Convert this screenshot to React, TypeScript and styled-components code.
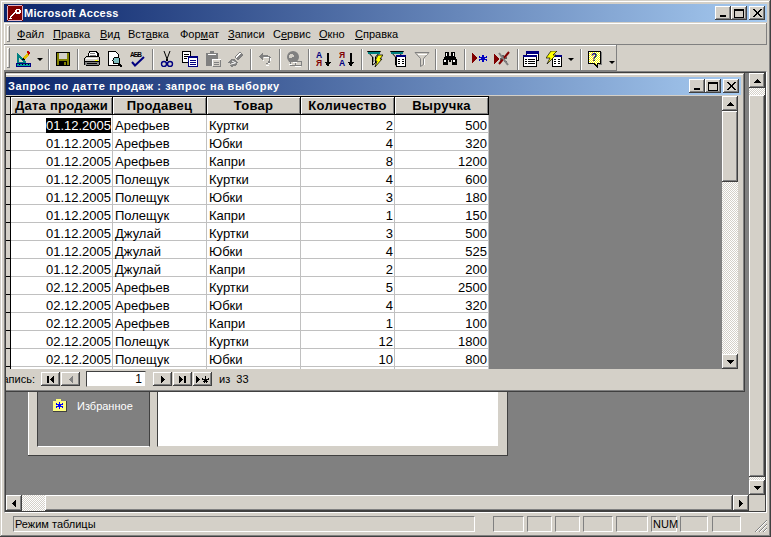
import React from 'react'
import styled, { createGlobalStyle } from 'styled-components'

const FACE = '#d4d0c8'
const raised = `box-shadow: inset -1px -1px 0 #404040, inset 1px 1px 0 #fff, inset -2px -2px 0 #808080;`
const checker = `background: repeating-conic-gradient(#fff 0 25%, ${FACE} 0 50%) 0 0 / 2px 2px;`

const GlobalStyle = createGlobalStyle`
  html, body { margin: 0; padding: 0; background: ${FACE}; }
  body { font-family: "Liberation Sans", Arial, sans-serif; font-size: 11px; color: #000; }
  svg { display: block; }
`

const Frame = styled.div`
  width: 771px;
  height: 537px;
  box-sizing: border-box;
  padding: 4px;
  background: ${FACE};
  display: flex;
  flex-direction: column;
  overflow: hidden;
  box-shadow: inset -1px -1px 0 #404040, inset 1px 1px 0 ${FACE}, inset -2px -2px 0 #808080, inset 2px 2px 0 #fff;
`
const TitleBar = styled.div`
  height: 18px;
  flex: none;
  display: flex;
  align-items: center;
  gap: 1px;
  padding: 0 2px 0 3px;
  background: linear-gradient(90deg, #0a246a, #a6caf0);
  color: #fff;
  font-weight: bold;
`
const MainTitle = styled.span`
  font-size: 11px;
  letter-spacing: 0.25px;
  white-space: nowrap;
`
const ChildTitle = styled.span`
  font-size: 11px;
  letter-spacing: 0.6px;
  margin-left: 1px;
  white-space: nowrap;
`
const TitleButtons = styled.div`
  margin-left: auto;
  display: flex;
`
const CaptionButton = styled.div<{ $gap?: boolean }>`
  width: 16px;
  height: 14px;
  margin-left: ${p => (p.$gap ? 2 : 0)}px;
  background: ${FACE};
  display: flex;
  align-items: center;
  justify-content: center;
  ${raised}
`
const MenuBar = styled.div`
  height: 22px;
  margin-top: 1px;
  flex: none;
  display: flex;
  align-items: center;
  padding-left: 3px;
  box-sizing: border-box;
  box-shadow: inset -1px -1px 0 #808080, inset 1px 1px 0 #fff;
`
const Grip = styled.div<{ $h: number }>`
  width: 3px;
  height: ${p => p.$h}px;
  flex: none;
  box-shadow: inset -1px -1px 0 #808080, inset 1px 1px 0 #fff;
`
const MenuItem = styled.span<{ $w: number }>`
  width: ${p => p.$w}px;
  flex: none;
  font-size: 11px;
  white-space: nowrap;
`
const MenuSpacer = styled.div`
  width: 7px;
  flex: none;
`
const ToolBar = styled.div`
  height: 26px;
  width: 613px;
  flex: none;
  display: flex;
  align-items: center;
  padding-left: 3px;
  box-sizing: border-box;
  box-shadow: inset -1px -1px 0 #808080, inset 1px 1px 0 #fff;
`
const ToolButton = styled.div<{ $x: number }>`
  position: absolute;
  left: ${p => p.$x}px;
  top: 51px;
`
const ToolSep = styled.div<{ $x: number }>`
  position: absolute;
  left: ${p => p.$x}px;
  top: 49px;
  width: 2px;
  height: 21px;
  box-shadow: inset 1px 0 0 #808080, inset -1px 0 0 #fff;
`
const DropArrow = styled.div<{ $x: number; $y?: number }>`
  position: absolute;
  left: ${p => p.$x}px;
  top: ${p => p.$y ?? 58}px;
  width: 0;
  height: 0;
  border-left: 3px solid transparent;
  border-right: 3px solid transparent;
  border-top: 3px solid #000;
`
const Workspace = styled.div`
  flex: none;
  height: 442px;
  box-sizing: border-box;
  border: 1px solid;
  border-color: #808080 #fff #fff #808080;
  background: #404040;
  padding: 1px;
  display: grid;
  grid-template-columns: 743px 16px;
  grid-template-rows: 422px 16px;
`
const ClientArea = styled.div`
  position: relative;
  overflow: hidden;
  background: #808080;
`
const ScrollV = styled.div`
  display: flex;
  flex-direction: column;
  background: ${FACE};
`
const ScrollH = styled.div`
  display: flex;
  background: ${FACE};
`
const ScrollButton = styled.div`
  width: 16px;
  height: 15px;
  flex: none;
  background: ${FACE};
  display: flex;
  align-items: center;
  justify-content: center;
  ${raised}
`
const ScrollHButton = styled(ScrollButton)`
  height: 16px;
`
const Thumb = styled.div<{ $size: number }>`
  height: ${p => p.$size}px;
  width: 16px;
  flex: none;
  background: ${FACE};
  ${raised}
`
const ThumbH = styled.div`
  flex: 1;
  height: 16px;
  background: ${FACE};
  ${raised}
`
const Checker = styled.div<{ $size: number; $horizontal?: boolean }>`
  flex: none;
  ${p => (p.$horizontal ? `width: ${p.$size}px; height: 16px;` : `height: ${p.$size}px; width: 16px;`)}
  ${checker}
`
const Corner = styled.div`
  background: ${FACE};
`
const StatusBar = styled.div`
  flex: 1;
  display: flex;
  align-items: flex-start;
  padding-top: 3px;
  position: relative;
`
const StatusPanel = styled.div<{ $w: number; $ml: number }>`
  width: ${p => p.$w}px;
  height: 16px;
  margin-left: ${p => p.$ml}px;
  box-sizing: border-box;
  flex: none;
  font-size: 11px;
  line-height: 15px;
  padding-left: 1px;
  border: 1px solid;
  border-color: #808080 #fff #fff #808080;
`
const SizeGrip = styled.svg`
  position: absolute;
  right: 0;
  bottom: 1px;
`

/* окно базы данных, лежит под запросом */
const DbWindow = styled.div`
  position: absolute;
  left: 22px;
  top: 230px;
  width: 480px;
  height: 153px;
  box-sizing: border-box;
  padding: 8px 9px 9px 9px;
  background: ${FACE};
  display: flex;
  gap: 7px;
  box-shadow: inset -1px -1px 0 #404040, inset 1px 1px 0 #fff;
`
const DbGroups = styled.div`
  width: 113px;
  flex: none;
  box-sizing: border-box;
  background: #808080;
  border: 1px solid;
  border-color: #404040 #404040 #fff #404040;
  display: flex;
  flex-direction: column;
  justify-content: flex-end;
  padding: 0 0 34px 14px;
`
const DbGroupRow = styled.div`
  display: flex;
  align-items: center;
  gap: 10px;
  color: #fff;
  font-size: 11px;
`
const DbList = styled.div`
  flex: 1;
  background: #fff;
  border: 1px solid;
  border-color: #404040 ${FACE} ${FACE} #404040;
`

/* окно запроса */
const QueryWindow = styled.div`
  position: absolute;
  left: -6px;
  top: 0;
  width: 745px;
  height: 319px;
  box-sizing: border-box;
  padding: 4px;
  background: ${FACE};
  display: flex;
  flex-direction: column;
  box-shadow: inset -1px -1px 0 #404040, inset 1px 1px 0 ${FACE}, inset -2px -2px 0 #808080, inset 2px 2px 0 #fff;
`
const QueryBody = styled.div`
  margin-top: 1px;
  height: 273px;
  flex: none;
  display: flex;
  padding-right: 3px;
`
const GridArea = styled.div`
  flex: 1;
  background: #808080;
  overflow: hidden;
`
const Sheet = styled.div`
  display: grid;
  grid-template-columns: 7px 102px repeat(4, 94px);
  grid-template-rows: 19px;
  grid-auto-rows: 18px;
  width: 485px;
  background: #fff;
`
const Selector = styled.div<{ $head?: boolean }>`
  background: ${FACE};
  box-sizing: border-box;
  border-right: 1px solid #000;
  border-bottom: 1px solid #000;
  ${p => (p.$head ? 'border-top: 1px solid #000;' : '')}
`
const HeadCell = styled.div`
  box-sizing: border-box;
  background: ${FACE};
  border-top: 1px solid #000;
  border-right: 1px solid #000;
  border-bottom: 1px solid #000;
  box-shadow: inset 1px 1px 0 #fff, inset -1px -1px 0 #808080;
  font-weight: bold;
  font-size: 13px;
  letter-spacing: 0.25px;
  line-height: 18px;
  text-align: center;
  white-space: nowrap;
`
const Cell = styled.div<{ $right?: boolean }>`
  box-sizing: border-box;
  border-right: 1px solid #c0c0c0;
  border-bottom: 1px solid #c0c0c0;
  font-size: 13px;
  line-height: 15px;
  padding: ${p => (p.$right ? '3px 1px 0 0' : '3px 0 0 2px')};
  text-align: ${p => (p.$right ? 'right' : 'left')};
  white-space: nowrap;
`
const Picked = styled.span`
  background: #000;
  color: #fff;
`
const RecordNav = styled.div`
  flex: 1;
  display: flex;
  align-items: center;
  padding-top: 1px;
  position: relative;
`
const NavLabel = styled.div`
  width: 31px;
  display: flex;
  justify-content: flex-end;
  font-size: 11px;
  white-space: nowrap;
`
const NavButton = styled.div<{ $ml?: number }>`
  width: 19px;
  height: 14px;
  margin-left: ${p => p.$ml ?? 1}px;
  flex: none;
  background: ${FACE};
  display: flex;
  align-items: center;
  justify-content: center;
  ${raised}
`
const NavInput = styled.div`
  width: 60px;
  height: 16px;
  margin: 0 7px 0 6px;
  flex: none;
  box-sizing: border-box;
  background: #fff;
  border: 1px solid;
  border-color: #404040 ${FACE} ${FACE} #404040;
  font-size: 12px;
  line-height: 14px;
  text-align: right;
  padding-right: 3px;
`
const NavTotal = styled.div`
  margin-left: 7px;
  font-size: 11px;
  white-space: pre;
`

const menu: [string, string, string, number][] = [
  ['', 'Ф', 'айл', 29],
  ['', 'П', 'равка', 40],
  ['', 'В', 'ид', 21],
  ['Вст', 'а', 'вка', 45],
  ['Фор', 'м', 'ат', 41],
  ['', 'З', 'аписи', 38],
  ['С', 'е', 'рвис', 39],
  ['', 'О', 'кно', 29],
  ['', 'С', 'правка', 45],
]

const rows: [string, string, string, number, number][] = [
  ['01.12.2005', 'Арефьев', 'Куртки', 2, 500],
  ['01.12.2005', 'Арефьев', 'Юбки', 4, 320],
  ['01.12.2005', 'Арефьев', 'Капри', 8, 1200],
  ['01.12.2005', 'Полещук', 'Куртки', 4, 600],
  ['01.12.2005', 'Полещук', 'Юбки', 3, 180],
  ['01.12.2005', 'Полещук', 'Капри', 1, 150],
  ['01.12.2005', 'Джулай', 'Куртки', 3, 500],
  ['01.12.2005', 'Джулай', 'Юбки', 4, 525],
  ['01.12.2005', 'Джулай', 'Капри', 2, 200],
  ['02.12.2005', 'Арефьев', 'Куртки', 5, 2500],
  ['02.12.2005', 'Арефьев', 'Юбки', 4, 320],
  ['02.12.2005', 'Арефьев', 'Капри', 1, 100],
  ['02.12.2005', 'Полещук', 'Куртки', 12, 1800],
  ['02.12.2005', 'Полещук', 'Юбки', 10, 800],
  ['', '', '', 0, 0],
]

const Ico = ({ children, w = 16, h = 16 }: { children: React.ReactNode; w?: number; h?: number }) => (
  <svg width={w} height={h} viewBox={`0 0 ${w} ${h}`} shapeRendering="crispEdges">{children}</svg>
)

const AccessKey = () => (
  <Ico>
    <rect width="16" height="16" fill="#800000" />
    <path d="M1 0h14v1H1zM0 1h1v14H0zM15 1h1v14h-1zM1 15h14v1H1z" fill="#e0b0c0" />
    <path d="M2 12l6-5 1 1-6 5zM2 13h3v1H2zM9 4h4v1h1v3h-1v1H9V8H8V5h1z" fill="#fff" />
    <rect x="10" y="5" width="2" height="2" fill="#800000" />
  </Ico>
)
const MinGlyph = () => <Ico w={8} h={8}><rect x="1" y="6" width="6" height="2" /></Ico>
const MaxGlyph = () => <Ico w={10} h={9}><path d="M0 0h10v2H0zM0 2h1v7H0zM9 2h1v7H9zM1 8h8v1H1z" /></Ico>
const CloseGlyph = () => (
  <Ico w={9} h={8}>
    <path d="M0 0h2v1h1v1h1v1h1V2h1V1h1V0h2v1H8v1H7v1H6v2h1v1h1v1h1v1H7V7H6V6H5V5H4v1H3v1H2v1H0V7h1V6h1V5h1V3H2V2H1V1H0z" />
  </Ico>
)
const ArrowUp = () => <Ico w={7} h={4}><path d="M3 0h1v1h1v1h1v1h1v1H0V3h1V2h1V1h1z" /></Ico>
const ArrowDown = () => <Ico w={7} h={4}><path d="M0 0h7v1H6v1H5v1H4v1H3V3H2V2H1V1H0z" /></Ico>
const ArrowLeft = ({ fill = '#000' }: { fill?: string }) => <Ico w={4} h={7}><path fill={fill} d="M3 0h1v7H3V6H2V5H1V4H0V3h1V2h1V1h1z" /></Ico>
const ArrowRight = () => <Ico w={4} h={7}><path d="M0 0h1v1h1v1h1v1h1v1H3v1H2v1H1v1H0z" /></Ico>

const DesignIcon = () => (
  <Ico>
    <path d="M2 2h1l8 9v1H2z" fill="#008080" />
    <path d="M4 6l4 5H4z" fill="#d4d0c8" />
    <rect x="1" y="12" width="15" height="4" fill="#000080" />
    <rect x="2" y="13" width="13" height="2" fill="#00a0a0" />
    <path d="M4 13h1v1H4zM7 13h1v1H7zM10 13h1v1h-1zM13 13h1v1h-1z" fill="#000" />
    <path d="M8 7l4-5 2 2-4 5z" fill="#e0c000" />
    <path d="M12 0h2v1h1v2h-1v1h-1V2h-1z" fill="#c00000" />
    <path d="M8 7h1v1h1v1H7z" fill="#000" />
  </Ico>
)
const SaveIcon = () => (
  <Ico>
    <rect x="1" y="1" width="14" height="14" fill="#000" />
    <rect x="2" y="2" width="12" height="12" fill="#808000" />
    <rect x="4" y="2" width="8" height="6" fill="#d4d0c8" />
    <rect x="4" y="10" width="8" height="5" fill="#000" />
    <rect x="9" y="11" width="2" height="3" fill="#808000" />
  </Ico>
)
const PrintIcon = () => (
  <Ico>
    <path d="M5 0h8v1h1v1h1v4H4V2h1z" fill="#000" />
    <path d="M6 1h6v1h1v3H5V2h1z" fill="#fff" />
    <path d="M6 2h5v1H6zM6 4h6v1H6z" fill="#808080" />
    <path d="M2 5h13v1h1v8h-1v1H2v-1H0V7h1V6h1z" fill="#000" />
    <path d="M2 6h13v2H2zM1 7h14v3H1z" fill="#d4d0c8" />
    <path d="M2 7h11v1H2z" fill="#fff" />
    <path d="M11 9h3v1h-3z" fill="#ffff00" />
    <path d="M1 11h14v3H1z" fill="#808080" />
    <path d="M3 12h10v1H3z" fill="#000" />
  </Ico>
)
const PreviewIcon = () => (
  <Ico>
    <path d="M1.5 .5h7l3 3v11h-10z" fill="#fff" stroke="#000" />
    <circle cx="9.5" cy="9.5" r="3.5" fill="#80c0c0" stroke="#000" />
    <path d="M12 12h1v1h1v1h1v2h-2v-1h-1v-1h-1z" fill="#000" />
  </Ico>
)
const SpellIcon = () => (
  <svg width="16" height="16" viewBox="0 0 16 16">
    <text x="0" y="6" fontFamily="Liberation Sans" fontWeight="bold" fontSize="6.5" textLength="12">АБВ</text>
    <path d="M2 11l3 3.5L14 6" fill="none" stroke="#000080" strokeWidth="2" />
  </svg>
)
const CutIcon = () => (
  <Ico>
    <path d="M5 0l3 8M11 0L8 8" stroke="#000" fill="none" shapeRendering="auto" />
    <path d="M7 8h2v2H7z" fill="#000" />
    <circle cx="5" cy="13" r="2.5" fill="none" stroke="#000080" strokeWidth="1.4" shapeRendering="auto" />
    <circle cx="11" cy="13" r="2.5" fill="none" stroke="#000080" strokeWidth="1.4" shapeRendering="auto" />
  </Ico>
)
const CopyIcon = () => (
  <Ico>
    <path d="M.5.5h8v11h-8z" fill="#fff" stroke="#000" />
    <path d="M2 3h5v1H2zM2 5h5v1H2zM2 7h3v1H2z" fill="#000" />
    <path d="M6.5 5.5h9v10h-9z" fill="#fff" stroke="#000080" />
    <path d="M6 5h10v2H6zM8 9h6v1H8zM8 11h6v1H8zM8 13h6v1H8z" fill="#000080" />
  </Ico>
)
const PasteIcon = () => (
  <Ico>
    <path d="M1 2h12v13H1z" fill="#808080" />
    <path d="M5 0h4v2h2v2H3V2h2z" fill="#808080" />
    <path d="M3 3h8v1H3zM7 8h9v1H7zM7 8h1v7H7z" fill="#fff" />
    <path d="M8 9h7v6H8z" fill="#d4d0c8" />
    <path d="M9 11h5v1H9zM9 13h5v1H9z" fill="#808080" />
    <path d="M15 9h1v7H8v-1h7z" fill="#808080" />
  </Ico>
)
const PainterIcon = () => (
  <Ico>
    <path d="M6 6l6-5 3 3-5 6z" fill="#808080" />
    <path d="M7 6l5-4 1 1-5 4z" fill="#fff" />
    <path d="M3 8h3l4 3-1 3-5 2-3-1 2-2-3-1z" fill="#808080" />
    <path d="M4 10l4 2M3 13l4-1" stroke="#fff" shapeRendering="auto" />
  </Ico>
)
const UndoIcon = () => (
  <Ico>
    <path d="M5 2h1v2h5v1h2v1h1v4h-1v2h-1v1H9v-1h2v-2h1V7h-1V6H6v3H5V8H4V7H3V6H2V5h1V4h1V3h1z" fill="#808080" />
    <path d="M6 9h1v1H6zM7 6h5v1H7zM13 7h1v3h-1zM11 12h2v1h-2zM9 14h3v1H9z" fill="#fff" />
  </Ico>
)
const LinkIcon = () => (
  <Ico>
    <circle cx="7" cy="6" r="6" fill="#808080" shapeRendering="auto" />
    <path d="M4 3h3v1h1v2H6v1H3V4h1z" fill="#d4d0c8" />
    <path d="M4 10h5v4H4zM9 10h6v4H9z" fill="#d4d0c8" stroke="#808080" />
    <path d="M3 13h3v1H3zM7 11h4v1H7zM9 15h6v1H9z" fill="#fff" />
  </Ico>
)
const SortIcon = ({ top, bottom, topColor, bottomColor }: { top: string; bottom: string; topColor: string; bottomColor: string }) => (
  <svg width="16" height="16" viewBox="0 0 16 16">
    <text x="0" y="7" fontFamily="Liberation Sans" fontWeight="bold" fontSize="8.5" fill={topColor}>{top}</text>
    <text x="0" y="15" fontFamily="Liberation Sans" fontWeight="bold" fontSize="8.5" fill={bottomColor}>{bottom}</text>
    <path d="M11 2h2v9h2l-3 5-3-5h2z" fill="#000" shapeRendering="crispEdges" />
  </svg>
)
const Funnel = ({ fill = '#d4d0c8' }: { fill?: string }) => (
  <g>
    <path d="M.5.5h13l-5 5.5v6l-3 2v-8z" fill={fill} stroke="#000" shapeRendering="auto" />
    <path d="M1 1h12v2H1z" fill="#008080" />
    <path d="M6 6h1v5H6z" fill="#808080" />
  </g>
)
const Bolt = () => <path d="M11 4h5l-3 4h2l-7 8 2-6H8z" fill="#ffff00" stroke="#000" strokeWidth="0.8" shapeRendering="auto" />
const FilterSelIcon = () => <Ico><Funnel /><Bolt /></Ico>
const MiniForm = () => (
  <g>
    <path d="M6.5 4.5h9v11h-9z" fill="#fff" stroke="#000" />
    <path d="M6 4h10v2H6z" fill="#000080" />
    <path d="M8 8h2v1H8zM12 8h2v1h-2zM8 10h2v1H8zM12 10h2v1h-2zM8 12h2v1H8zM12 12h2v1h-2z" fill="#000" />
  </g>
)
const FilterFormIcon = () => <Ico><Funnel /><MiniForm /></Ico>
const FilterOffIcon = () => (
  <Ico>
    <path d="M1 1.5h14l-5.5 6v6l-3 2v-8z" fill="#d4d0c8" stroke="#808080" shapeRendering="auto" />
    <path d="M3 3h10l-1 1H4zM10 8h1v6h-1z" fill="#fff" />
  </Ico>
)
const BinocularsIcon = () => (
  <Ico>
    <path d="M3 1h4v4h2V1h4v5h1v2h1v6H10V9H9v2H7V9H6v5H1V8h1V6h1z" fill="#000" />
    <path d="M4 2h1v3H4zM11 2h1v3h-1zM2 9h2v2H2zM11 9h2v2h-2z" fill="#fff" />
  </Ico>
)
const NewRecordIcon = () => (
  <Ico>
    <path d="M1 2h1v1h1v1h1v1h1v1h1v2H5v1H4v1H3v1H2v1H1z" fill="#800000" />
    <path d="M11 4h2v2h2v-1h1v2h-2v1h2v2h-1v-1h-2v2h-2V9H9v1H8V8h2V7H8V5h1v1h2z" fill="#0000c0" />
  </Ico>
)
const DeleteRecordIcon = () => (
  <Ico>
    <path d="M0 3h1v1h1v1h1v1h1v1h1v2H4v1H3v1H2v1H1v1H0z" fill="#800000" />
    <path d="M8 4h2v3h2V6h1v2h-2v2h2v1h-3V9H7v1H6V7h2z" fill="#606060" />
    <path d="M5 13L15 1" stroke="#800000" strokeWidth="2" shapeRendering="auto" />
    <path d="M5 2l9 12" stroke="#808080" strokeWidth="2" shapeRendering="auto" />
  </Ico>
)
const DbWindowIcon = () => (
  <Ico>
    <path d="M3.5 .5h12v9h-12z" fill="#fff" stroke="#000" />
    <path d="M3 0h13v3H3z" fill="#000080" />
    <path d="M.5 4.5h13v11H.5z" fill="#fff" stroke="#000" />
    <path d="M0 4h14v2H0z" fill="#000080" />
    <path d="M2 8h2v1H2zM5 8h7v1H5zM2 10h2v1H2zM5 10h7v1H5zM2 12h2v1H2zM5 12h7v1H5z" fill="#000" />
  </Ico>
)
const NewObjectIcon = () => (
  <Ico>
    <MiniForm />
    <path d="M5 0h6L7 4h3L1 13l3-6H0z" fill="#ffff00" stroke="#000" strokeWidth="0.7" shapeRendering="auto" />
  </Ico>
)
const HelpIcon = () => (
  <svg width="16" height="17" viewBox="0 0 16 17">
    <defs>
      <pattern id="dots" width="2" height="2" patternUnits="userSpaceOnUse">
        <rect width="2" height="2" fill="#ffff00" />
        <rect width="1" height="1" fill="#fff" />
        <rect x="1" y="1" width="1" height="1" fill="#fff" />
      </pattern>
    </defs>
    <path d="M.5 .5h12v12H9v3l-3-3H.5z" fill="url(#dots)" stroke="#000" shapeRendering="crispEdges" />
    <path d="M13 1h1v13h-3v-1h2z" fill="#808080" shapeRendering="crispEdges" />
    <text x="3" y="10" fontFamily="Liberation Sans" fontWeight="bold" fontSize="10" fill="#000080">?</text>
  </svg>
)
const FavoritesIcon = () => (
  <svg width="15" height="13" viewBox="0 0 15 13" shapeRendering="crispEdges">
    <path d="M1 2h3V0h5v2h5v10H1z" fill="#ffff80" />
    <path d="M14 2h1v11H1v-1h13z" fill="#404040" />
    <path d="M7 3h1v2h2V4h1v2H9v1h2v2h-1V8H8v2H7V8H5v1H4V7h2V6H4V4h1v1h2z" fill="#0000ff" />
  </svg>
)

const tools: [number, React.ReactNode][] = [
  [15, <DesignIcon />], [55, <SaveIcon />], [84, <PrintIcon />], [107, <PreviewIcon />], [130, <SpellIcon />],
  [159, <CutIcon />], [182, <CopyIcon />], [205, <PasteIcon />], [228, <PainterIcon />], [257, <UndoIcon />],
  [286, <LinkIcon />], [316, <SortIcon top="А" bottom="Я" topColor="#000080" bottomColor="#800000" />],
  [339, <SortIcon top="Я" bottom="А" topColor="#800000" bottomColor="#000080" />],
  [367, <FilterSelIcon />], [390, <FilterFormIcon />], [414, <FilterOffIcon />], [442, <BinocularsIcon />],
  [471, <NewRecordIcon />], [494, <DeleteRecordIcon />], [523, <DbWindowIcon />], [546, <NewObjectIcon />], [588, <HelpIcon />],
]
const seps = [48, 77, 152, 250, 279, 308, 361, 435, 464, 517, 580]
const panels: [number, number][] = [[462, 9], [31, 18], [25, 3], [25, 3], [30, 3], [32, 3], [26, 3], [28, 3], [29, 4]]

const App: React.FC = () => (
  <Frame>
    <GlobalStyle />
    <TitleBar>
      <AccessKey />
      <MainTitle>Microsoft Access</MainTitle>
      <TitleButtons>
        <CaptionButton><MinGlyph /></CaptionButton>
        <CaptionButton><MaxGlyph /></CaptionButton>
        <CaptionButton $gap><CloseGlyph /></CaptionButton>
      </TitleButtons>
    </TitleBar>
    <MenuBar>
      <Grip $h={16} />
      <MenuSpacer />
      {menu.map(([a, u, b, w]) => (
        <MenuItem key={a + u + b} $w={w + 7}>{a}<u>{u}</u>{b}</MenuItem>
      ))}
    </MenuBar>
    <ToolBar>
      <Grip $h={20} />
    </ToolBar>
    {tools.map(([x, icon]) => <ToolButton key={x} $x={x}>{icon}</ToolButton>)}
    {seps.map(x => <ToolSep key={x} $x={x} />)}
    <DropArrow $x={37} />
    <DropArrow $x={568} />
    <DropArrow $x={609} $y={61} />
    <Workspace>
      <ClientArea>
        <DbWindow>
          <DbGroups>
            <DbGroupRow><FavoritesIcon />Избранное</DbGroupRow>
          </DbGroups>
          <DbList />
        </DbWindow>
        <QueryWindow>
          <TitleBar>
            <ChildTitle>Запрос по датте продаж : запрос на выборку</ChildTitle>
            <TitleButtons>
              <CaptionButton><MinGlyph /></CaptionButton>
              <CaptionButton><MaxGlyph /></CaptionButton>
              <CaptionButton $gap><CloseGlyph /></CaptionButton>
            </TitleButtons>
          </TitleBar>
          <QueryBody>
            <GridArea>
              <Sheet>
                <Selector $head />
                {['Дата продажи', 'Продавец', 'Товар', 'Количество', 'Выручка'].map(h => <HeadCell key={h}>{h}</HeadCell>)}
                {rows.map((r, i) => (
                  <React.Fragment key={i}>
                    <Selector />
                    <Cell $right>{i === 0 ? <Picked>{r[0]}</Picked> : r[0]}</Cell>
                    <Cell>{r[1]}</Cell>
                    <Cell>{r[2]}</Cell>
                    <Cell $right>{r[3] || ''}</Cell>
                    <Cell $right>{r[4] || ''}</Cell>
                  </React.Fragment>
                ))}
              </Sheet>
            </GridArea>
            <ScrollV>
              <ScrollButton><ArrowUp /></ScrollButton>
              <Thumb $size={71} />
              <Checker $size={172} />
              <ScrollButton><ArrowDown /></ScrollButton>
            </ScrollV>
          </QueryBody>
          <RecordNav>
            <NavLabel>Запись:</NavLabel>
            <NavButton $ml={6}><Ico w={7} h={7}><path d="M0 0h2v7H0zM6 0h1v7H6V6H5V5H4V4H3V3h1V2h1V1h1z" /></Ico></NavButton>
            <NavButton><ArrowLeft fill="#808080" /></NavButton>
            <NavInput>1</NavInput>
            <NavButton $ml={0}><ArrowRight /></NavButton>
            <NavButton><Ico w={7} h={7}><path d="M0 0h1v1h1v1h1v1h1v1H3v1H2v1H1v1H0zM5 0h2v7H5z" /></Ico></NavButton>
            <NavButton><Ico w={13} h={7}><path d="M0 0h1v1h1v1h1v1h1v1H3v1H2v1H1v1H0zM9 0h1v3h2V2h1v2h-2v1h1v1h-1v1h-1V6H9v1H8V6H7V5h1V4H6V2h1v1h2z" /></Ico></NavButton>
            <NavTotal>из  33</NavTotal>
          </RecordNav>
        </QueryWindow>
      </ClientArea>
      <ScrollV>
        <ScrollButton><ArrowUp /></ScrollButton>
        <Checker $size={7} />
        <Thumb $size={382} />
        <Checker $size={3} />
        <ScrollButton><ArrowDown /></ScrollButton>
      </ScrollV>
      <ScrollH>
        <ScrollHButton><ArrowLeft /></ScrollHButton>
        <Checker $size={23} $horizontal />
        <ThumbH />
        <ScrollHButton><ArrowRight /></ScrollHButton>
      </ScrollH>
      <Corner />
    </Workspace>
    <StatusBar>
      {panels.map(([w, ml], i) => (
        <StatusPanel key={i} $w={w} $ml={ml}>{i === 0 ? 'Режим таблицы' : i === 6 ? 'NUM' : ''}</StatusPanel>
      ))}
      <SizeGrip width="13" height="13" viewBox="0 0 13 13">
        <path d="M13 1L1 13M13 5l-8 8M13 9l-4 4" stroke="#808080" fill="none" />
        <path d="M13 2L2 13M13 6l-7 7M13 10l-3 3" stroke="#fff" fill="none" />
      </SizeGrip>
    </StatusBar>
  </Frame>
)

export default App
